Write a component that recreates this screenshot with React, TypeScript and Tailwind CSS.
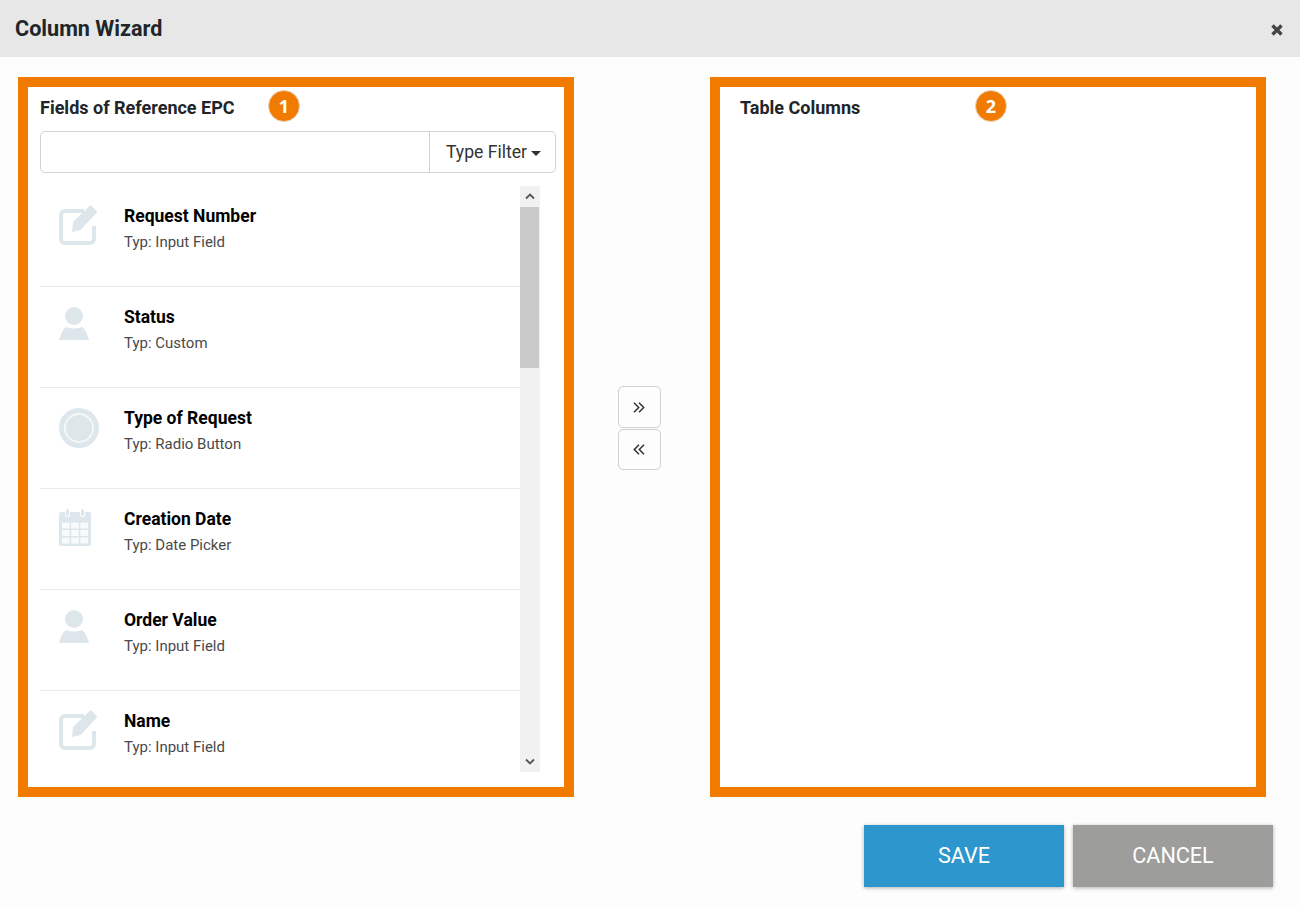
function EditIcon() {
  return (
    <svg width="40" height="40" viewBox="0 0 40 40" className="-mt-[1px]">
      <path fill="none" stroke="#dde7eb" strokeWidth="4" d="M25 6H6a4 4 0 0 0-4 4v24a4 4 0 0 0 4 4h25a4 4 0 0 0 4-4V21" />
      <path fill="#dde7eb" d="M13 27l1-10L30 1.500l1.500-1.500 7 6.500-1.500 2L21.500 25z" />
    </svg>
  );
}
function UserIcon() {
  return (
    <svg width="30" height="34" viewBox="0 0 30 34">
      <circle cx="15" cy="9" r="9" fill="#dde7eb" />
      <path fill="#dde7eb" d="M7 20Q15 23 23 20Q26 21 30 32.500Q30 33 29 33H1Q0 33 0 32.500Q4 21 7 20z" />
    </svg>
  );
}
function RadioIcon() {
  return (
    <svg width="40" height="40" viewBox="0 0 40 40">
      <circle cx="20" cy="20" r="20" fill="#dde7eb" />
      <circle cx="20" cy="20" r="14" fill="none" stroke="#f4f7f8" strokeWidth="2" />
    </svg>
  );
}
function CalendarIcon() {
  const cols = [3, 12.2, 21.4];
  const rowsY = [13.500, 21, 28.500];
  return (
    <svg width="32" height="37" viewBox="0 0 32 37">
      <path fill="#dde7eb" d="M2 3h4v2.500a2.500 2.500 0 0 0 5 0V3h10v2.500a2.500 2.500 0 0 0 5 0V3h4a2 2 0 0 1 2 2v30a2 2 0 0 1-2 2H2a2 2 0 0 1-2-2V5a2 2 0 0 1 2-2z" />
      <rect x="7" y="0" width="3" height="7" rx="1.500" fill="#dde7eb" />
      <rect x="22" y="0" width="3" height="7" rx="1.500" fill="#dde7eb" />
      {cols.map((x) => rowsY.map((y) => <rect key={`${x}-${y}`} x={x} y={y} width="7.600" height="6" fill="#f8fafb" />))}
    </svg>
  );
}

const rows = [
  { title: "Request Number", sub: "Typ: Input Field", icon: <EditIcon /> },
  { title: "Status", sub: "Typ: Custom", icon: <UserIcon /> },
  { title: "Type of Request", sub: "Typ: Radio Button", icon: <RadioIcon /> },
  { title: "Creation Date", sub: "Typ: Date Picker", icon: <CalendarIcon /> },
  { title: "Order Value", sub: "Typ: Input Field", icon: <UserIcon /> },
  { title: "Name", sub: "Typ: Input Field", icon: <EditIcon /> },
];

function Badge({ n, className }: { n: string; className: string }) {
  return (
    <span className={`absolute top-[3px] w-[32px] h-[32px] rounded-full bg-[#f07b00] border border-[#e8d5bf] flex items-center justify-center text-white text-[18px] font-bold font-['Open_Sans',sans-serif] ${className}`}>
      {n}
    </span>
  );
}

function Angles({ flip }: { flip?: boolean }) {
  return (
    <svg width="12" height="11" viewBox="0 0 12 11" className={flip ? "-scale-x-100" : ""}>
      <path fill="none" stroke="#333" strokeWidth="1.500" d="M1 .8l4.700 4.700L1 10.200M6 .8l4.700 4.700L6 10.200" />
    </svg>
  );
}

export default function App() {
  return (
    <div className="w-[1300px] h-[907px] bg-[#fdfdfd] flex flex-col overflow-hidden font-['Roboto',sans-serif] text-[#212529]">
      <header className="h-[57px] shrink-0 bg-[#e7e7e7] flex items-center justify-between pl-[15px] pr-[17px]">
        <h1 className="text-[21.600px] font-bold pt-[1px]">Column Wizard</h1>
        <svg width="12" height="12" viewBox="0 0 12 12" className="mt-[3px]">
          <path fill="none" stroke="#444" strokeWidth="3.400" d="M1.500 1.500l9 9M10.500 1.500l-9 9" />
        </svg>
      </header>

      <main className="flex pl-[18px] pt-[20px]">
        <section className="w-[556px] h-[720px] border-[10px] border-[#f07b00] pl-[12px] pr-[8px] bg-white flex flex-col">
          <div className="relative h-[44px] pt-[9px] shrink-0">
            <h2 className="text-[18px] leading-[24px] font-bold">Fields of Reference EPC</h2>
            <Badge n="1" className="left-[228px]" />
          </div>
          <div className="h-[42px] shrink-0 flex border border-[#ced4da] rounded-[5px]">
            <div className="flex-1" />
            <div className="w-[126px] border-l border-[#ced4da] flex items-center justify-center text-[17.600px] text-[#333] gap-[4px] pl-[2px]">
              Type Filter
              <span className="w-0 h-0 border-x-[5px] border-x-transparent border-t-[5px] border-t-[#333] mt-[2px]" />
            </div>
          </div>
          <div className="flex mt-[13px] w-[500px] h-[586px]">
            <ul className="w-[480px]">
              {rows.map((r, i) => (
                <li key={r.title} className={`h-[101px] flex pl-[19px] ${i < 5 ? "border-b border-[#e9ecef]" : ""}`}>
                  <div className="w-[65px] pt-[20px] shrink-0">{r.icon}</div>
                  <div className="pt-[18px]">
                    <div className="text-[17.500px] leading-[24px] font-bold text-black">{r.title}</div>
                    <div className="text-[15px] leading-[20px] mt-[4px] text-[#4a4a4a]">{r.sub}</div>
                  </div>
                </li>
              ))}
            </ul>
            <div className="w-[20px] bg-[#f1f1f1] flex flex-col justify-between">
              <div>
                <div className="h-[21px] flex items-center justify-center">
                  <svg width="10" height="7" viewBox="0 0 10 7"><path d="M1 5.500l4-4 4 4" fill="none" stroke="#555" strokeWidth="1.800" /></svg>
                </div>
                <div className="h-[161px] w-[19px] bg-[#c9c9c9]" />
              </div>
              <div className="h-[21px] flex items-center justify-center">
                <svg width="10" height="7" viewBox="0 0 10 7"><path d="M1 1.500l4 4 4-4" fill="none" stroke="#555" strokeWidth="1.800" /></svg>
              </div>
            </div>
          </div>
        </section>

        <div className="w-[136px] h-[720px] flex flex-col items-center pt-[309px] pr-[6px]">
          <div className="w-[43px] h-[42px] border border-[#d0d0d0] rounded-[5px] flex items-center justify-center">
            <Angles />
          </div>
          <div className="w-[43px] h-[41px] mt-[1px] pb-[1px] border border-[#d0d0d0] rounded-[5px] flex items-center justify-center">
            <Angles flip />
          </div>
        </div>

        <section className="w-[556px] h-[720px] border-[10px] border-[#f07b00] pl-[20px] bg-white">
          <div className="relative h-[44px] pt-[9px]">
            <h2 className="text-[18px] leading-[24px] font-bold">Table Columns</h2>
            <Badge n="2" className="left-[235px]" />
          </div>
        </section>
      </main>

      <footer className="flex justify-end gap-[9px] pr-[27px] pt-[28px]">
        <button className="w-[200px] h-[62px] bg-[#2d96cd] text-white text-[21.600px] shadow-[0_1px_4px_rgba(0,0,0,0.3)]">SAVE</button>
        <button className="w-[200px] h-[62px] bg-[#9d9d9b] text-white text-[21.600px] shadow-[0_1px_4px_rgba(0,0,0,0.3)]">CANCEL</button>
      </footer>
    </div>
  );
}
